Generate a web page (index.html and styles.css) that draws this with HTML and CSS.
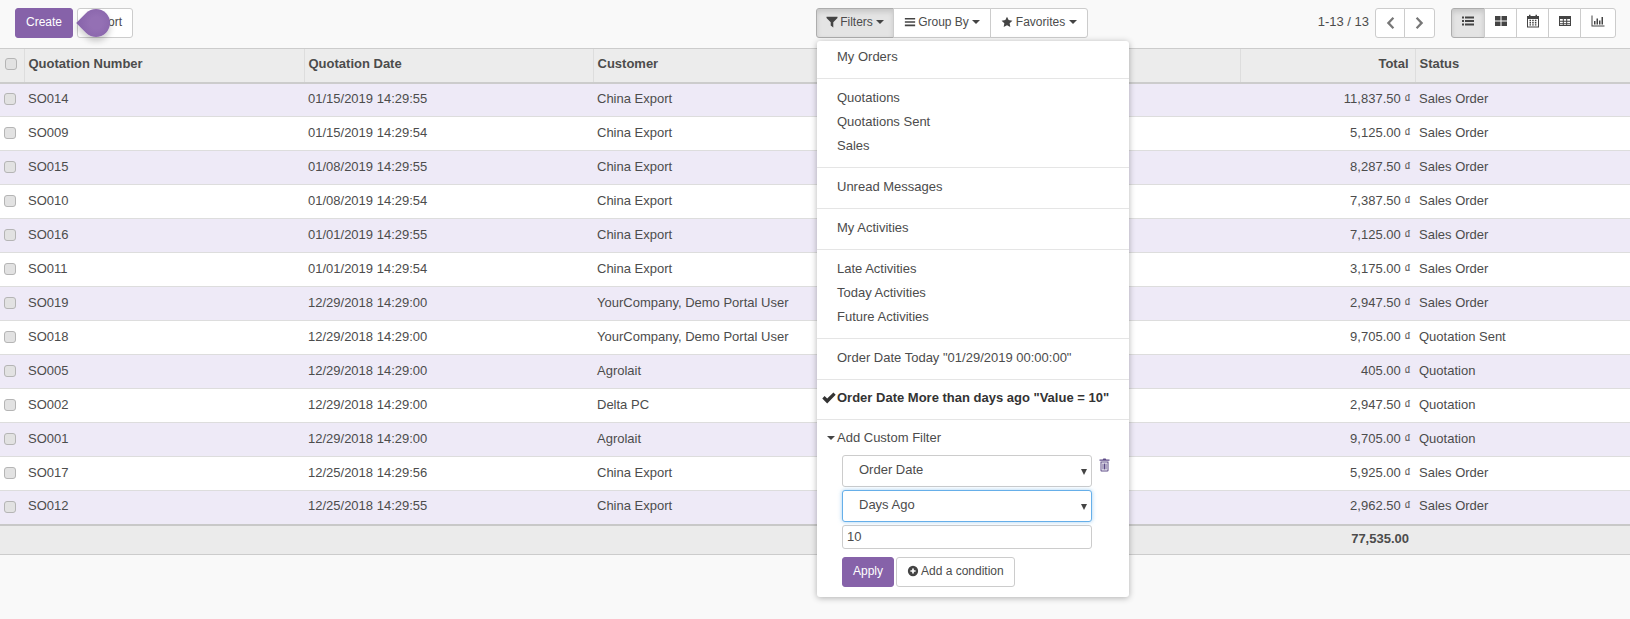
FILE: index.html
```html
<!DOCTYPE html>
<html lang="en">
<head>
    <meta charset="UTF-8">
    <title>Quotations</title>
    <link rel="stylesheet" href="styles.css">
</head>
<body>
    <div class="panel">
        <div class="panel-left">
            <button class="btn btn-primary">Create</button>
            <button class="btn btn-default btn-import">Import</button>
            <span class="tip"></span>
        </div>
        <div class="search">
            <div class="btn-group">
                <button class="btn btn-default btn-active">
                    <svg class="ico" viewBox="0 0 14 14"><path d="M.6 1h12.8v1.200L8.500 7.200V13.400L5.500 11V7.200L.6 2.200z"/></svg>
                    Filters <span class="caret"></span>
                </button>
                <button class="btn btn-default">
                    <svg class="ico" viewBox="0 0 14 14"><path d="M1 2.200h12v1.900H1zM1 6.100h12V8H1zM1 10h12v1.900H1z"/></svg>
                    Group By <span class="caret"></span>
                </button>
                <button class="btn btn-default">
                    <svg class="ico" viewBox="0 0 14 14"><path d="M7 .8l1.900 4 4.400.6-3.200 3.100.8 4.400L7 10.800l-3.900 2.100.8-4.400L.7 5.400l4.400-.6z"/></svg>
                    Favorites <span class="caret"></span>
                </button>
            </div>
            <div class="dropdown">
                <a class="item">My Orders</a>
                <div class="divider"></div>
                <a class="item">Quotations</a>
                <a class="item">Quotations Sent</a>
                <a class="item">Sales</a>
                <div class="divider"></div>
                <a class="item">Unread Messages</a>
                <div class="divider"></div>
                <a class="item">My Activities</a>
                <div class="divider"></div>
                <a class="item">Late Activities</a>
                <a class="item">Today Activities</a>
                <a class="item">Future Activities</a>
                <div class="divider"></div>
                <a class="item">Order Date Today "01/29/2019 00:00:00"</a>
                <div class="divider"></div>
                <a class="item item-selected">
                    <svg class="check" viewBox="0 0 14 14"><path d="M.3 7.400L2.600 5 5.200 7.600 11.400 1.400 13.700 3.800 5.200 12.400z"/></svg>
                    Order Date More than days ago "Value = 10"
                </a>
                <div class="divider"></div>
                <a class="item item-custom"><span class="caret"></span>Add Custom Filter</a>
                <div class="custom">
                    <div class="condition">
                        <div class="select-wrap">
                            <select class="select"><option>Order Date</option></select>
                        </div>
                        <svg class="trash" viewBox="0 0 12 14"><path fill-rule="evenodd" d="M4.200 1.600L4.900.6h2.200l.7 1H11v1.200H1V1.600zM2 3.400h8v9.200c0 .5-.4.9-.9.9H2.900c-.5 0-.9-.4-.9-.9zm1 1v8.100h6V4.400zm1 1h1v6H4zm1.500 0h1v6h-1zm1.500 0h1v6H7z"/></svg>
                    </div>
                    <div class="select-wrap">
                        <select class="select select-focus"><option>Days Ago</option></select>
                    </div>
                    <input class="value" type="text" value="10">
                    <div class="custom-btns">
                        <button class="btn btn-primary btn-apply">Apply</button>
                        <button class="btn btn-default btn-add">
                            <svg class="ico" viewBox="0 0 14 14"><path fill-rule="evenodd" d="M7 1a6 6 0 1 1 0 12A6 6 0 0 1 7 1zM6 4v2H4v2h2v2h2V8h2V6H8V4z"/></svg>
                            Add a condition
                        </button>
                    </div>
                </div>
            </div>
        </div>
        <div class="panel-right">
            <span class="pager-value">1-13 / 13</span>
            <div class="btn-group pager">
                <button class="btn btn-default btn-icon"><svg class="chev" viewBox="0 0 10 14"><path d="M7.600 1L1.800 7l5.800 6 1.600-1.600L5 7l4.200-4.400z"/></svg></button>
                <button class="btn btn-default btn-icon"><svg class="chev" viewBox="0 0 10 14"><path d="M2.400 1L8.200 7l-5.800 6L.8 11.400 5 7 .8 2.600z"/></svg></button>
            </div>
            <div class="btn-group views">
                <button class="btn btn-default btn-view btn-active">
                    <svg class="vico" viewBox="0 0 14 14"><path d="M1 2.500h2v2H1zM4 2.500h9v2H4zM1 6h2v2H1zM4 6h9v2H4zM1 9.500h2v2H1zM4 9.500h9v2H4z"/></svg>
                </button>
                <button class="btn btn-default btn-view">
                    <svg class="vico" viewBox="0 0 14 14"><path d="M1 2h5.500v4.500H1zM7.500 2H13v4.500H7.500zM1 7.500h5.500V12H1zM7.500 7.500H13V12H7.500z"/></svg>
                </button>
                <button class="btn btn-default btn-view">
                    <svg class="vico" viewBox="0 0 14 14"><path fill-rule="evenodd" d="M1 2h2V.8h1.500V2h5V.8H11V2h2v11.500H1zM2 5v7.500h10V5zm1.500.8h1.500v1.400H3.500zm2.700 0h1.500v1.400H6.200zm2.700 0h1.500v1.400H8.900zM3.500 8h1.500v1.400H3.500zm2.700 0h1.500v1.400H6.200zm2.700 0h1.500v1.400H8.900zM3.500 10.200h1.500v1.400H3.500zm2.700 0h1.500v1.400H6.200zm2.700 0h1.500v1.400H8.900z"/></svg>
                </button>
                <button class="btn btn-default btn-view">
                    <svg class="vico" viewBox="0 0 14 14"><path fill-rule="evenodd" d="M1 2h12v10H1zM2 5v1.800h2.800V5zm3.800 0v1.800h2.400V5zm3.400 0v1.800H12V5zM2 7.700v1.600h2.800V7.700zm3.800 0v1.600h2.400V7.700zm3.400 0v1.600H12V7.700zM2 10.200V11h2.800v-.8zm3.800 0V11h2.400v-.8zm3.400 0V11H12v-.8z"/></svg>
                </button>
                <button class="btn btn-default btn-view">
                    <svg class="vico" viewBox="0 0 14 14"><path d="M.5 1.500h1v10h12v1H.5zM3 7h1.500v3.500H3zM5.500 4.500H7v6H5.500zM8 6.500h1.500v4H8zM10.500 3H12v7.500h-1.500z"/></svg>
                </button>
            </div>
        </div>
    </div>

    <table class="list">
        <colgroup>
            <col class="c-check"><col class="c-number"><col class="c-date"><col class="c-customer"><col class="c-sales"><col class="c-total"><col>
        </colgroup>
        <thead>
            <tr>
                <th><input class="cb" type="checkbox"></th>
                <th>Quotation Number</th>
                <th>Quotation Date</th>
                <th>Customer</th>
                <th></th>
                <th class="num">Total</th>
                <th>Status</th>
            </tr>
        </thead>
        <tbody>
            <tr><td><input class="cb" type="checkbox"></td><td>SO014</td><td>01/15/2019 14:29:55</td><td>China Export</td><td></td><td class="num">11,837.50 ₫</td><td>Sales Order</td></tr>
            <tr><td><input class="cb" type="checkbox"></td><td>SO009</td><td>01/15/2019 14:29:54</td><td>China Export</td><td></td><td class="num">5,125.00 ₫</td><td>Sales Order</td></tr>
            <tr><td><input class="cb" type="checkbox"></td><td>SO015</td><td>01/08/2019 14:29:55</td><td>China Export</td><td></td><td class="num">8,287.50 ₫</td><td>Sales Order</td></tr>
            <tr><td><input class="cb" type="checkbox"></td><td>SO010</td><td>01/08/2019 14:29:54</td><td>China Export</td><td></td><td class="num">7,387.50 ₫</td><td>Sales Order</td></tr>
            <tr><td><input class="cb" type="checkbox"></td><td>SO016</td><td>01/01/2019 14:29:55</td><td>China Export</td><td></td><td class="num">7,125.00 ₫</td><td>Sales Order</td></tr>
            <tr><td><input class="cb" type="checkbox"></td><td>SO011</td><td>01/01/2019 14:29:54</td><td>China Export</td><td></td><td class="num">3,175.00 ₫</td><td>Sales Order</td></tr>
            <tr><td><input class="cb" type="checkbox"></td><td>SO019</td><td>12/29/2018 14:29:00</td><td>YourCompany, Demo Portal User</td><td></td><td class="num">2,947.50 ₫</td><td>Sales Order</td></tr>
            <tr><td><input class="cb" type="checkbox"></td><td>SO018</td><td>12/29/2018 14:29:00</td><td>YourCompany, Demo Portal User</td><td></td><td class="num">9,705.00 ₫</td><td>Quotation Sent</td></tr>
            <tr><td><input class="cb" type="checkbox"></td><td>SO005</td><td>12/29/2018 14:29:00</td><td>Agrolait</td><td></td><td class="num">405.00 ₫</td><td>Quotation</td></tr>
            <tr><td><input class="cb" type="checkbox"></td><td>SO002</td><td>12/29/2018 14:29:00</td><td>Delta PC</td><td></td><td class="num">2,947.50 ₫</td><td>Quotation</td></tr>
            <tr><td><input class="cb" type="checkbox"></td><td>SO001</td><td>12/29/2018 14:29:00</td><td>Agrolait</td><td></td><td class="num">9,705.00 ₫</td><td>Quotation</td></tr>
            <tr><td><input class="cb" type="checkbox"></td><td>SO017</td><td>12/25/2018 14:29:56</td><td>China Export</td><td></td><td class="num">5,925.00 ₫</td><td>Sales Order</td></tr>
            <tr><td><input class="cb" type="checkbox"></td><td>SO012</td><td>12/25/2018 14:29:55</td><td>China Export</td><td></td><td class="num">2,962.50 ₫</td><td>Sales Order</td></tr>
        </tbody>
        <tfoot>
            <tr><td></td><td></td><td></td><td></td><td></td><td class="num">77,535.00</td><td></td></tr>
        </tfoot>
    </table>
</body>
</html>
```

FILE: styles.css
```css
* {
    box-sizing: border-box;
}
body {
    margin: 0;
    min-height: 100vh;
    background-color: #f9f9f9;
    color: #4c4c4c;
    font-family: "Liberation Sans", Arial, sans-serif;
    font-size: 13px;
    line-height: 18px;
}

/* control panel */
.panel {
    display: grid;
    grid-template-columns: 816px 1fr auto;
    height: 48px;
    padding-top: 8px;
}
.panel-left {
    position: relative;
    display: flex;
    gap: 4px;
    align-items: flex-start;
    padding-left: 15px;
}
.panel-right {
    display: flex;
    align-items: flex-start;
    padding-right: 14px;
}
.search {
    position: relative;
}
.btn {
    height: 30px;
    padding: 0 10px 3px;
    border: 1px solid #ccc;
    border-radius: 3px;
    background-color: #fff;
    color: #4c4c4c;
    font-family: inherit;
    font-size: 12px;
    white-space: nowrap;
}
.btn-primary {
    width: 58px;
    border-color: #8662a9;
    background-color: #8662a9;
    color: #fff;
}
.btn-import {
    width: 56px;
}
.btn-group {
    display: inline-flex;
}
.btn-group .btn {
    border-radius: 0;
    margin-left: -1px;
}
.btn-group .btn:first-child {
    margin-left: 0;
    border-radius: 3px 0 0 3px;
}
.btn-group .btn:last-child {
    border-radius: 0 3px 3px 0;
}
.btn-active {
    border-color: #adadad;
    background-color: #e4e4e4;
    box-shadow: inset 0 3px 5px rgba(0, 0, 0, .125);
}
.search .btn-group .btn {
    width: 98px;
    padding: 0 0 3px;
}
.search .btn-group .btn:first-child {
    width: 78px;
}
.ico {
    width: 12px;
    height: 12px;
    margin-right: -1px;
    fill: #444;
    vertical-align: -2px;
}
.caret {
    display: inline-block;
    width: 0;
    height: 0;
    border-top: 4px solid #444;
    border-left: 4px solid transparent;
    border-right: 4px solid transparent;
    vertical-align: 2px;
}

/* onboarding tip on the import button */
.tip {
    position: absolute;
    top: 1px;
    left: 82px;
    width: 28px;
    height: 28px;
    border-radius: 50% 50% 50% 0;
    background: radial-gradient(circle, #9470b4 30%, #8662a9 100%);
    box-shadow: 3px 3px 6px rgba(0, 0, 0, .2);
    transform: rotate(45deg);
}

/* pager and view switcher */
.pager-value {
    margin-right: 6px;
    line-height: 27px;
}
.pager {
    margin-right: 16px;
}
.btn-icon {
    width: 30px;
    padding: 0;
}
.btn-icon:last-child {
    width: 31px;
}
.chev {
    width: 10px;
    height: 14px;
    fill: #777;
    vertical-align: middle;
}
.btn-view {
    width: 33px;
    padding: 0 0 3px;
}
.btn-view:first-child {
    width: 34px;
}
.btn-view:last-child {
    width: 36px;
}
.vico {
    width: 14px;
    height: 14px;
    fill: #444;
    vertical-align: -2px;
}

/* filters menu */
.dropdown {
    position: absolute;
    top: 33px;
    left: 1px;
    z-index: 10;
    width: 312px;
    height: 556px;
    padding-top: 4px;
    border-radius: 3px;
    background-color: #fff;
    box-shadow: 0 1px 6px rgba(0, 0, 0, .3);
}
.item {
    display: block;
    position: relative;
    padding: 3px 20px;
    white-space: nowrap;
}
.divider {
    height: 1px;
    margin: 9px 0 7px;
    background-color: #e5e5e5;
}
.item-selected {
    margin: -1px 0 1px;
    font-weight: 700;
    color: #333;
}
.check {
    position: absolute;
    top: 5px;
    left: 5px;
    width: 14px;
    height: 14px;
    fill: #333;
}
.item-custom {
    margin-top: -1px;
}
.item-custom .caret {
    position: absolute;
    top: 10px;
    left: 10px;
}
.custom {
    display: flex;
    flex-direction: column;
    gap: 3px;
    padding: 5px 0 0 25px;
}
.condition {
    display: flex;
    gap: 6px;
}
.select-wrap {
    position: relative;
    width: 250px;
}
.select-wrap::after {
    content: "";
    position: absolute;
    top: 14px;
    right: 5px;
    border-top: 6px solid #444;
    border-left: 3px solid transparent;
    border-right: 3px solid transparent;
}
.select {
    display: block;
    width: 100%;
    height: 32px;
    padding: 0 0 4px 16px;
    border: 1px solid #ccc;
    border-radius: 3px;
    background-color: #fff;
    color: #4c4c4c;
    font-family: inherit;
    font-size: 13px;
    appearance: none;
}
.select-focus {
    border-color: #66afe9;
    box-shadow: 0 0 4px rgba(102, 175, 233, .6);
}
.trash {
    width: 13px;
    height: 14px;
    margin-top: 3px;
    fill: #5d4a86;
}
.value {
    width: 250px;
    height: 24px;
    padding: 0 4px 2px;
    border: 1px solid #ccc;
    border-radius: 3px;
    color: #4c4c4c;
    font-family: inherit;
    font-size: 13px;
}
.custom-btns {
    display: flex;
    gap: 2px;
    margin-top: 5px;
}
.btn-apply {
    width: 52px;
}
.btn-add {
    width: 119px;
    padding: 0 0 3px;
}

/* list view */
.list {
    width: 100%;
    border-collapse: collapse;
    table-layout: fixed;
}
.c-check { width: 24px; }
.c-number { width: 280px; }
.c-date { width: 289px; }
.c-customer { width: 340px; }
.c-sales { width: 307px; }
.c-total { width: 175px; }
.list th {
    height: 34px;
    padding: 0 4px 3px;
    border-top: 1px solid #ccc;
    border-bottom: 2px solid #ccc;
    border-left: 1px solid #ddd;
    background-color: #ececec;
    text-align: left;
    font-weight: 700;
    white-space: nowrap;
}
.list th:first-child {
    border-left: 0;
    padding: 0 0 3px 5px;
}
.list th.num {
    padding-right: 6px;
}
.list td {
    height: 34px;
    padding: 0 4px 2px;
    border-top: 1px solid #ddd;
    white-space: nowrap;
}
.list tbody td:first-child {
    padding: 0 0 1px 4px;
}
.list tbody tr:nth-child(odd) {
    background-color: #eeeaf7;
}
.list tbody tr:nth-child(even) {
    background-color: #fff;
}
.list tbody tr:first-child td {
    border-top: 0;
}
.list .num {
    text-align: right;
}
.list tfoot td {
    height: 30px;
    border-top: 2px solid #c8c8c8;
    border-bottom: 1px solid #ccc;
    background-color: #ebebeb;
    font-weight: 700;
}
.list tfoot td.num {
    padding-right: 6px;
}
.cb {
    display: block;
    width: 12px;
    height: 12px;
    margin: 0;
    border: 1px solid #b5b5b5;
    border-radius: 3px;
    background-color: #e2e2e2;
    appearance: none;
}
```
